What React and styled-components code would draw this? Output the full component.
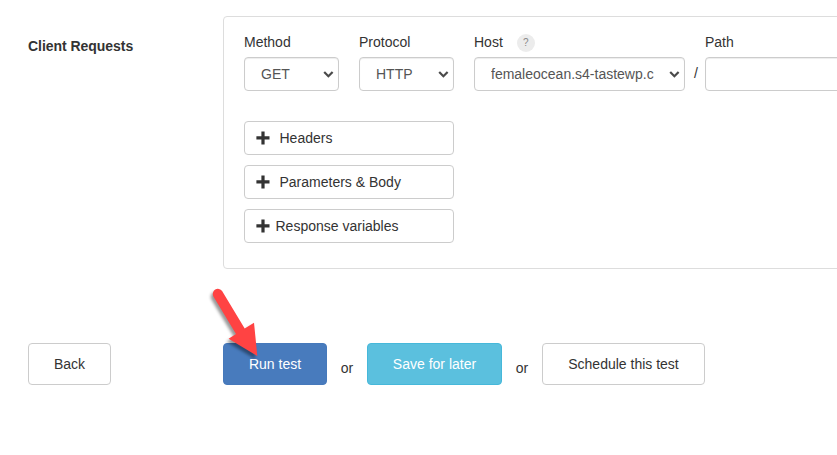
import React from "react";
import styled, { createGlobalStyle } from "styled-components";

const GlobalStyle = createGlobalStyle`
  *, *::before, *::after { box-sizing: border-box; }
  html, body { margin: 0; background: #fff; overflow: hidden; }
  body {
    font-family: "Liberation Sans", Arial, sans-serif;
    font-size: 14px;
    line-height: 20px;
    color: #333;
  }
`;

const Page = styled.main`
  position: relative;
  height: 455px;
  overflow: hidden;
`;

const Section = styled.section`
  display: grid;
  grid-template-columns: 195px 700px;
  padding: 16px 0 0 28px;
`;

const SectionTitle = styled.h2`
  margin: 20px 0 0;
  font-size: 14px;
  line-height: 20px;
  font-weight: bold;
  letter-spacing: -0.04px;
`;

const Panel = styled.div`
  height: 253px;
  padding: 15px 20px;
  border: 1px solid #ddd;
  border-radius: 4px;
`;

const Fields = styled.div`
  display: flex;
  align-items: flex-end;
`;

const Field = styled.div`
  flex: none;
  width: ${(p) => p.$width}px;
  margin-right: ${(p) => p.$gap || 0}px;
`;

const Label = styled.label`
  display: flex;
  align-items: center;
  height: 20px;
  margin-bottom: 5px;
`;

const Help = styled.span`
  width: 18px;
  height: 18px;
  margin: 2px 0 0 14px;
  border-radius: 50%;
  background: #ececec;
  color: #888;
  font-size: 10px;
  line-height: 18px;
  text-align: center;
`;

const SelectBox = styled.div`
  position: relative;

  svg {
    position: absolute;
    right: 5px;
    top: 13px;
    pointer-events: none;
  }
`;

const Select = styled.select`
  appearance: none;
  display: block;
  width: 100%;
  height: 34px;
  padding: 6px 16px;
  border: 1px solid #ccc;
  border-radius: 4px;
  background: #fff;
  box-shadow: inset 0 1px 1px rgba(0, 0, 0, 0.075);
  color: #555;
  font: 14px/20px "Liberation Sans", Arial, sans-serif;
`;

const Input = styled.input`
  display: block;
  width: 100%;
  height: 34px;
  padding: 6px 12px;
  border: 1px solid #ccc;
  border-radius: 4px;
  box-shadow: inset 0 1px 1px rgba(0, 0, 0, 0.075);
`;

const Slash = styled.span`
  flex: none;
  width: 20px;
  padding: 0 0 8px 2px;
  text-align: center;
`;

const Expanders = styled.div`
  display: flex;
  flex-direction: column;
  gap: 10px;
  width: 210px;
  margin-top: 30px;
`;

const Expander = styled.button`
  display: flex;
  align-items: center;
  gap: ${(p) => p.$gap}px;
  height: 34px;
  padding: 0 11px;
  border: 1px solid #ccc;
  border-radius: 4px;
  background: #fff;
  color: #333;
  font: inherit;

  svg { display: block; margin-top: -1px; }
`;

const Actions = styled.div`
  display: flex;
  align-items: center;
  padding: 74px 0 0 28px;
`;

const tones = {
  plain: { bg: "#fff", border: "#ccc", color: "#333" },
  primary: { bg: "#487bbd", border: "#4679bb", color: "#fff" },
  info: { bg: "#5bc0de", border: "#46b8da", color: "#fff" },
};

const Button = styled.button`
  flex: none;
  width: ${(p) => p.$width}px;
  height: 42px;
  margin-right: ${(p) => p.$gap || 0}px;
  padding: 0;
  border: 1px solid ${(p) => tones[p.$tone].border};
  border-radius: 4px;
  background: ${(p) => tones[p.$tone].bg};
  color: ${(p) => tones[p.$tone].color};
  font: inherit;
`;

const Or = styled.span`
  flex: none;
  width: 40px;
  padding-top: 8px;
  text-align: center;
`;

const Pointer = styled.svg`
  position: absolute;
  left: 200px;
  top: 280px;
  pointer-events: none;
  filter: drop-shadow(-2px 3px 1.5px rgba(0, 0, 0, 0.4));
`;

const Plus = () => (
  <svg width="14" height="14" viewBox="0 0 14 14" fill="#333" aria-hidden="true">
    <path d="M5.4 .5h3.2v4.7h4.9v3.3H8.6v4.9H5.4V8.5H.4V5.2h5z" />
  </svg>
);

const Dropdown = ({ id, value }) => (
  <SelectBox>
    <Select id={id}><option>{value}</option></Select>
    <svg width="11" height="9" viewBox="0 0 11 9" fill="none" stroke="#4a4a4a" strokeWidth="2.2" aria-hidden="true">
      <path d="M1.2 2l4.2 4.2L9.6 2" />
    </svg>
  </SelectBox>
);

export default function App() {
  return (
    <>
      <GlobalStyle />
      <Page>
        <Section>
          <SectionTitle>Client Requests</SectionTitle>
          <Panel>
            <Fields>
              <Field $width={95} $gap={20}>
                <Label htmlFor="method">Method</Label>
                <Dropdown id="method" value="GET" />
              </Field>
              <Field $width={95} $gap={20}>
                <Label htmlFor="protocol">Protocol</Label>
                <Dropdown id="protocol" value="HTTP" />
              </Field>
              <Field $width={211}>
                <Label htmlFor="host">Host<Help>?</Help></Label>
                <Dropdown id="host" value="femaleocean.s4-tastewp.c" />
              </Field>
              <Slash>/</Slash>
              <Field $width={190}>
                <Label htmlFor="path">Path</Label>
                <Input id="path" />
              </Field>
            </Fields>
            <Expanders>
              <Expander $gap={9.5}><Plus />Headers</Expander>
              <Expander $gap={9.5}><Plus />Parameters &amp; Body</Expander>
              <Expander $gap={5.5}><Plus />Response variables</Expander>
            </Expanders>
          </Panel>
        </Section>
        <Actions>
          <Button $tone="plain" $width={83} $gap={112}>Back</Button>
          <Button $tone="primary" $width={104}>Run test</Button>
          <Or>or</Or>
          <Button $tone="info" $width={135}>Save for later</Button>
          <Or>or</Or>
          <Button $tone="plain" $width={163}>Schedule this test</Button>
        </Actions>
        <Pointer width="70" height="85" viewBox="0 0 70 85" fill="#ff4343" aria-hidden="true">
          <path d="M13.4 16.4A5.1 5.1 0 0 1 22.1 11.1L44.7 48.6 54 42.7 57.3 76 28.6 58.7 36 54z" />
        </Pointer>
      </Page>
    </>
  );
}
